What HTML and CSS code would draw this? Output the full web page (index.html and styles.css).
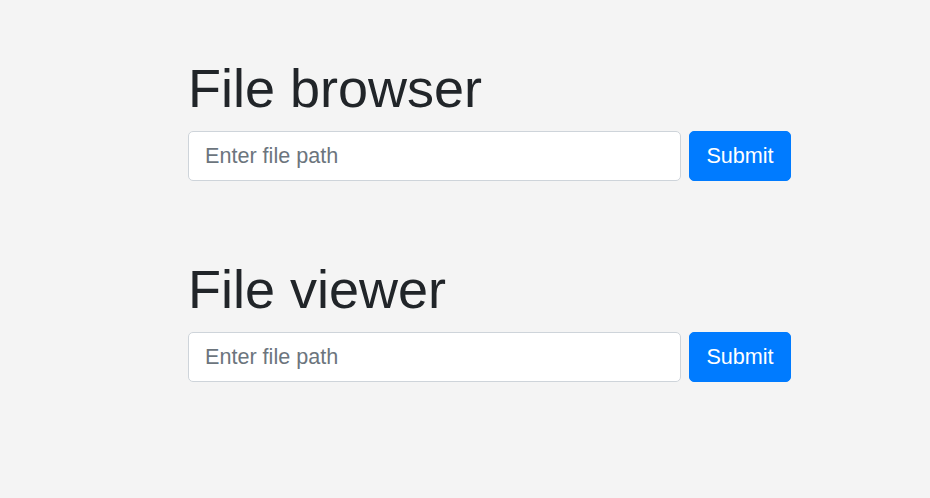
FILE: index.html
```html
<!DOCTYPE html>
<html lang="en">
<head>
<meta charset="utf-8">
<title>File browser</title>
<link rel="stylesheet" href="styles.css">
</head>
<body>
<main class="page">
  <section class="panel">
    <h1 class="title">File browser</h1>
    <form class="row">
      <input class="field" type="text" placeholder="Enter file path">
      <button class="btn" type="button">Submit</button>
    </form>
  </section>
  <section class="panel">
    <h1 class="title">File viewer</h1>
    <form class="row">
      <input class="field" type="text" placeholder="Enter file path">
      <button class="btn" type="button">Submit</button>
    </form>
  </section>
</main>
</body>
</html>
```
FILE: styles.css
```css
html, body {
  margin: 0;
  padding: 0;
  background: #f4f4f4;
  font-family: "Liberation Sans", Arial, sans-serif;
  color: #212529;
}
.page {
  padding: 56px 0 0 188px;
  width: 603px;
  display: flex;
  flex-direction: column;
  gap: 76px;
}
.title {
  margin: 0 0 10px;
  font-size: 54px;
  font-weight: 400;
  line-height: 1.2;
}
.row {
  display: flex;
  gap: 8px;
  margin: 0;
}
.field {
  flex: 1;
  box-sizing: border-box;
  height: 50px;
  padding: 0 16px;
  border: 1px solid #ced4da;
  border-radius: 5px;
  background: #fff;
  font-family: inherit;
  font-size: 21.6px;
  color: #495057;
  outline: none;
}
.field::placeholder {
  color: #6c757d;
  opacity: 1;
}
.btn {
  box-sizing: border-box;
  width: 102px;
  height: 50px;
  border: 1px solid #007bff;
  border-radius: 5px;
  background: #007bff;
  color: #fff;
  font-family: inherit;
  font-size: 21.6px;
  padding: 0;
}
```
